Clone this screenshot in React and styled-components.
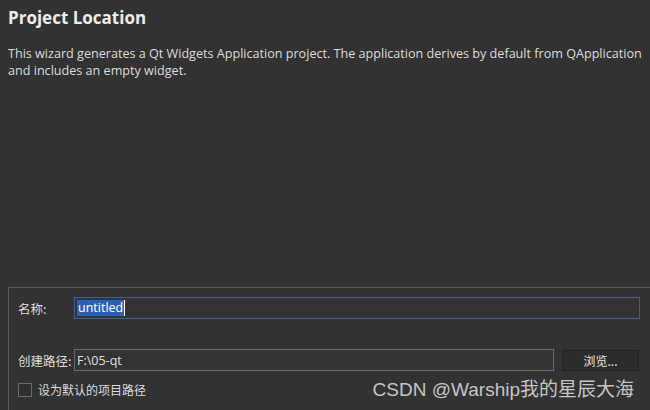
import React from "react";
import styled, { createGlobalStyle } from "styled-components";

const Global = createGlobalStyle`
  html, body { margin: 0; padding: 0; background: #323232; }
  body { width: 650px; height: 410px; overflow: hidden; font-family: "Open Sans", "Noto Sans CJK SC", sans-serif; }
`;

const Page = styled.div`
  position: relative;
  width: 650px;
  height: 410px;
  background: #323232;
  color: #e6e6e6;
  display: flex;
  flex-direction: column;
`;

const Header = styled.div`
  padding: 6px 8px 0 8px;
  height: 281px;
  box-sizing: border-box;
`;

const Title = styled.h1`
  margin: 0;
  font-size: 17px;
  font-weight: 700;
  line-height: 24px;
  color: #ececec;
`;

const Desc = styled.div`
  margin: 16px 0 0 0;
  display: flex;
  flex-direction: column;
  gap: 0;
`;

const DescLine = styled.span`
  font-size: 12.6px;
  line-height: 16.5px;
  color: #dcdcdc;
  white-space: nowrap;
`;

const Frame = styled.div`
  margin-left: 8px;
  margin-top: 6px;
  border-top: 1px solid #5a5a5a;
  border-left: 1px solid #5a5a5a;
  flex: 1;
  padding: 9px 10px 0 9px;
  display: flex;
  flex-direction: column;
`;

const Row = styled.div`
  display: flex;
  align-items: center;
  flex: ${(p) => (p.$grow ? 1 : "none")};
  gap: ${(p) => p.$gap || 0}px;
  margin-top: ${(p) => p.$mt || 0}px;
`;

const Label = styled.span`
  width: 56px;
  font-size: 12.5px;
  color: #dedede;
  font-family: "Noto Sans CJK SC", sans-serif;
  white-space: nowrap;
`;

const Field = styled.div`
  height: 22px;
  box-sizing: border-box;
  flex: 1;
  border: 1px solid ${(p) => (p.$focus ? "#3d5f91" : "#6a6a6a")};
  background: #333333;
  display: flex;
  align-items: center;
  padding-left: 2px;
  font-size: 12.5px;
  color: #e0e0e0;
`;

const Selected = styled.span`
  background: #2c5fb8;
  color: #ffffff;
  padding: 0 1px;
  line-height: 16px;
  border-right: 1px solid #fff;
`;

const Button = styled.div`
  width: 77px;
  height: 21px;
  margin-right: 1px;
  box-sizing: border-box;
  border: 1px solid #222;
  background: #2c2c2c;
  display: flex;
  align-items: center;
  justify-content: center;
  font-size: 12px;
  color: #e8e8e8;
  font-family: "Noto Sans CJK SC", sans-serif;
`;

const Check = styled.span`
  width: 12px;
  height: 12px;
  border: 1px solid #6a6a6a;
  background: #2f2f2f;
`;

const CheckLabel = styled.span`
  font-size: 12px;
  color: #dcdcdc;
  font-family: "Noto Sans CJK SC", sans-serif;
`;

const Watermark = styled.div`
  position: absolute;
  right: 16px;
  bottom: 9px;
  font-family: "Liberation Sans", "Noto Sans CJK SC", sans-serif;
  font-size: 19px;
  color: #d6d6d6;
  opacity: 0.9;
`;

export default function App() {
  return (
    <Page>
      <Global />
      <Header>
        <Title>Project Location</Title>
        <Desc>
          <DescLine>
            This wizard generates a Qt Widgets Application project. The application derives by default from QApplication
          </DescLine>
          <DescLine>and includes an empty widget.</DescLine>
        </Desc>
      </Header>
      <Frame>
        <Row>
          <Label>名称:</Label>
          <Field $focus>
            <Selected>untitled</Selected>
          </Field>
        </Row>
        <Row $mt={30} $gap={8}>
          <Row $grow>
            <Label>创建路径:</Label>
            <Field>F:\05-qt</Field>
          </Row>
          <Button>浏览...</Button>
        </Row>
        <Row $mt={10} $gap={6}>
          <Check />
          <CheckLabel>设为默认的项目路径</CheckLabel>
        </Row>
      </Frame>
      <Watermark>CSDN @Warship我的星辰大海</Watermark>
    </Page>
  );
}
